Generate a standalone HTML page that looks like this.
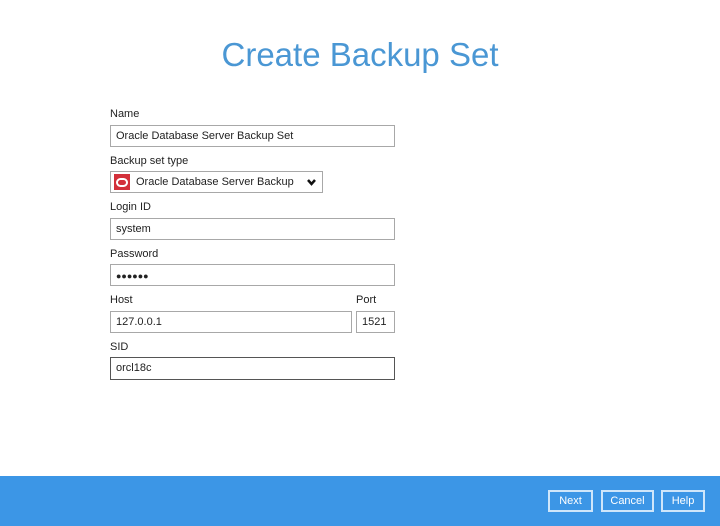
<!DOCTYPE html><html><head><style>
body{margin:0;width:720px;height:526px;background:#fff;font-family:"Liberation Sans",sans-serif;position:relative;overflow:hidden;color:#222}
.t{position:absolute;left:0;width:720px;text-align:center;top:36px;font-size:33px;color:#4a97d4;font-weight:normal}
.l{position:absolute;font-size:11px;color:#222}
.i{position:absolute;box-sizing:border-box;border:1px solid #a8a8a8;height:22px;font-size:11px;padding:5px 5px;line-height:11px}
.f{position:absolute;left:0;top:476px;width:720px;height:50px;background:#3c96e6}
.b{position:absolute;top:14px;height:22px;box-sizing:border-box;border:2px solid #cfe6fa;color:#fff;font-size:11px;text-align:center;line-height:18px}
</style></head><body>
<div class="t">Create Backup Set</div>
<div class="l" style="left:110px;top:108px">Name</div>
<div class="i" style="left:110px;top:125px;width:285px">Oracle Database Server Backup Set</div>
<div class="l" style="left:110px;top:155px">Backup set type</div>
<div class="i" style="left:110px;top:171px;width:213px;padding-left:25px">Oracle Database Server Backup
<div style="position:absolute;left:3px;top:2px;width:16px;height:16px;background:#d3303a"><div style="position:absolute;left:2px;top:4px;width:8px;height:5px;border:2px solid #fff;border-radius:5px"></div></div>
<svg style="position:absolute;right:6px;top:7px" width="9" height="7"><path d="M1 1L4.5 5L8 1" stroke="#111" stroke-width="2.5" fill="none"/></svg></div>
<div class="l" style="left:110px;top:201px">Login ID</div>
<div class="i" style="left:110px;top:218px;width:285px">system</div>
<div class="l" style="left:110px;top:248px">Password</div>
<div class="i" style="left:110px;top:264px;width:285px;font-size:9px;padding-top:6px">●●●●●●</div>
<div class="l" style="left:110px;top:294px">Host</div>
<div class="l" style="left:356px;top:294px">Port</div>
<div class="i" style="left:110px;top:311px;width:242px">127.0.0.1</div>
<div class="i" style="left:356px;top:311px;width:39px">1521</div>
<div class="l" style="left:110px;top:341px">SID</div>
<div class="i" style="left:110px;top:357px;width:285px;height:23px;border-color:#555">orcl18c</div>
<div class="f">
<div class="b" style="left:548px;width:45px">Next</div>
<div class="b" style="left:601px;width:53px">Cancel</div>
<div class="b" style="left:661px;width:44px">Help</div>
</div>
</body></html>
